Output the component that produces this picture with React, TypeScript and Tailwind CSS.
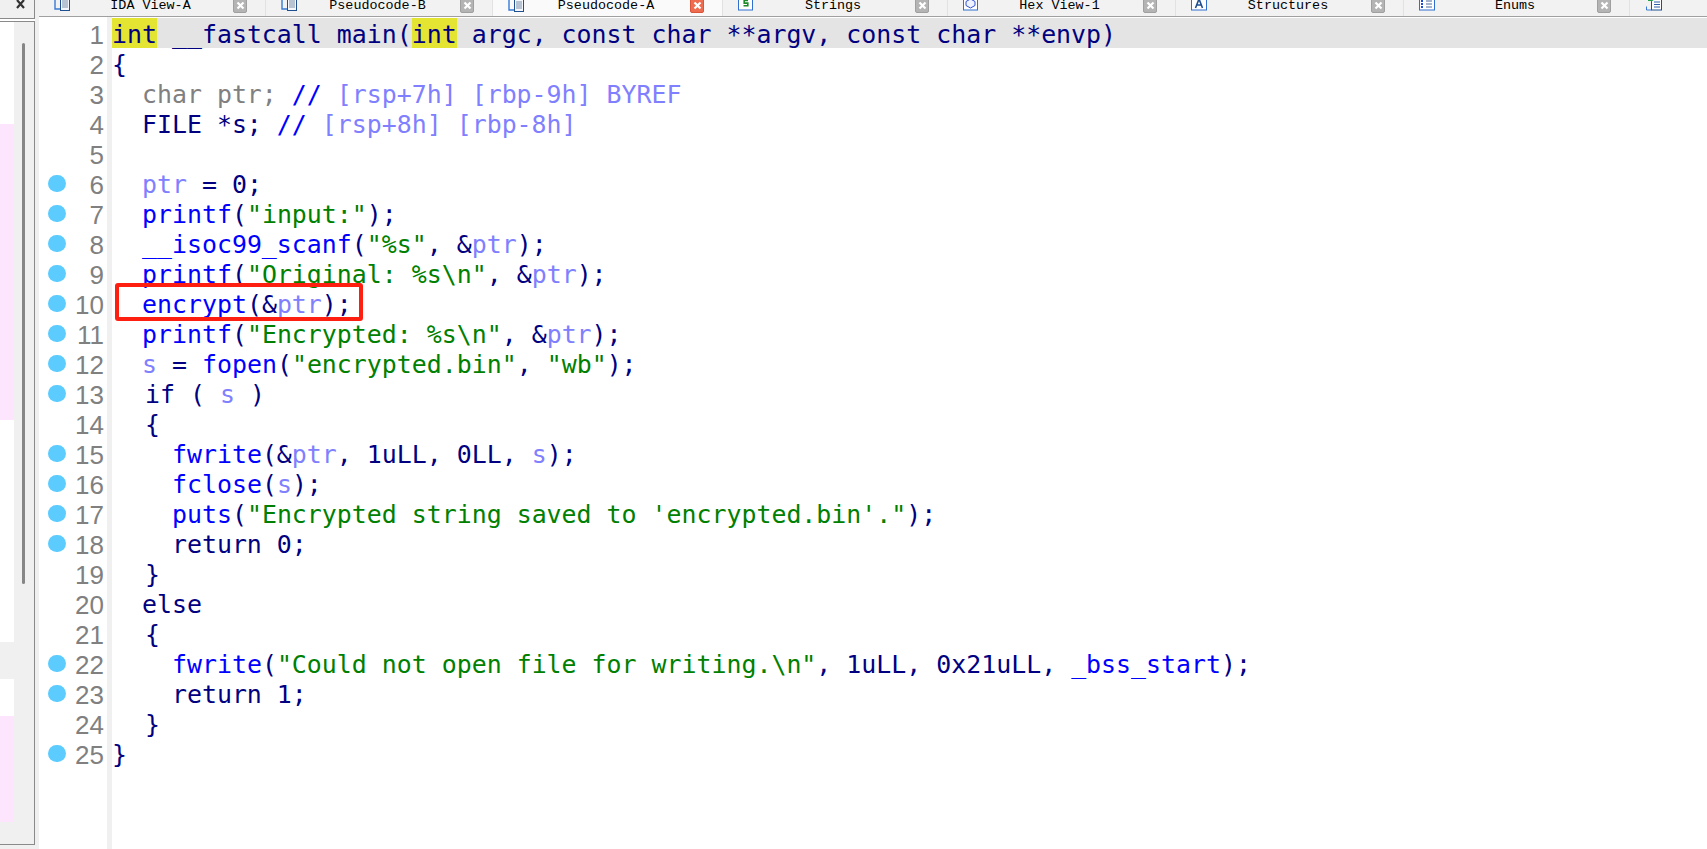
import React from "react";

const NAVY = "text-[#000080]";
const BLUE = "text-[#0000ff]";
const VAR = "text-[#8080ff]";
const STR = "text-[#008000]";
const GRAY = "text-[#808080]";
const YEL = "text-[#000080] bg-[#e4e432]";

type Seg = [string, string];
type Line = { segs: Seg[]; dot?: boolean; shift?: boolean; active?: boolean };

const lines: Line[] = [
  {
    active: true,
    segs: [
      ["int", YEL],
      [" __fastcall main(", NAVY],
      ["int", YEL],
      [" argc, const char **argv, const char **envp)", NAVY],
    ],
  },
  { segs: [["{", NAVY]] },
  { segs: [["  char ptr; ", GRAY], ["// ", BLUE], ["[rsp+7h] [rbp-9h] BYREF", VAR]] },
  { segs: [["  FILE *s; ", NAVY], ["// ", BLUE], ["[rsp+8h] [rbp-8h]", VAR]] },
  { segs: [] },
  { dot: true, segs: [["  ", NAVY], ["ptr", VAR], [" = 0;", NAVY]] },
  { dot: true, segs: [["  ", NAVY], ["printf", BLUE], ["(", NAVY], ['"input:"', STR], [");", NAVY]] },
  { dot: true, segs: [["  ", NAVY], ["__isoc99_scanf", BLUE], ["(", NAVY], ['"%s"', STR], [", &", NAVY], ["ptr", VAR], [");", NAVY]] },
  { dot: true, segs: [["  ", NAVY], ["printf", BLUE], ["(", NAVY], ['"Original: %s\\n"', STR], [", &", NAVY], ["ptr", VAR], [");", NAVY]] },
  { dot: true, segs: [["  ", NAVY], ["encrypt", BLUE], ["(&", NAVY], ["ptr", VAR], [");", NAVY]] },
  { dot: true, segs: [["  ", NAVY], ["printf", BLUE], ["(", NAVY], ['"Encrypted: %s\\n"', STR], [", &", NAVY], ["ptr", VAR], [");", NAVY]] },
  { dot: true, segs: [["  ", NAVY], ["s", VAR], [" = ", NAVY], ["fopen", BLUE], ["(", NAVY], ['"encrypted.bin"', STR], [", ", NAVY], ['"wb"', STR], [");", NAVY]] },
  { dot: true, shift: true, segs: [["  if ( ", NAVY], ["s", VAR], [" )", NAVY]] },
  { shift: true, segs: [["  {", NAVY]] },
  { dot: true, segs: [["    ", NAVY], ["fwrite", BLUE], ["(&", NAVY], ["ptr", VAR], [", 1uLL, 0LL, ", NAVY], ["s", VAR], [");", NAVY]] },
  { dot: true, segs: [["    ", NAVY], ["fclose", BLUE], ["(", NAVY], ["s", VAR], [");", NAVY]] },
  { dot: true, segs: [["    ", NAVY], ["puts", BLUE], ["(", NAVY], ['"Encrypted string saved to \'encrypted.bin\'."', STR], [");", NAVY]] },
  { dot: true, segs: [["    return 0;", NAVY]] },
  { shift: true, segs: [["  }", NAVY]] },
  { segs: [["  else", NAVY]] },
  { shift: true, segs: [["  {", NAVY]] },
  { dot: true, segs: [["    ", NAVY], ["fwrite", BLUE], ["(", NAVY], ['"Could not open file for writing.\\n"', STR], [", 1uLL, 0x21uLL, ", NAVY], ["_bss_start", BLUE], [");", NAVY]] },
  { dot: true, segs: [["    return 1;", NAVY]] },
  { shift: true, segs: [["  }", NAVY]] },
  { dot: true, segs: [["}", NAVY]] },
];

function CloseBox({ active }: { active?: boolean }) {
  return (
    <span
      className={`flex h-[15px] w-[14px] shrink-0 -mt-[6px] items-center justify-center rounded-[2px] border ${
        active ? "border-[#d9553c] bg-[#ee6c50]" : "border-[#a0a0a0] bg-[#b4b4b4]"
      }`}
    >
      <svg width="9" height="9" viewBox="0 0 9 9">
        <path d="M1.5 1.5 7.5 7.5M7.5 1.5 1.5 7.5" stroke="#fff" strokeWidth="2.2" />
      </svg>
    </span>
  );
}

function PageIcon() {
  return (
    <svg width="16" height="14" viewBox="0 0 16 14" className="shrink-0 -mt-[6px]">
      <path d="M1 0v11h6" fill="none" stroke="#3a7bd5" strokeWidth="1.4" />
      <rect x="6.5" y="0.5" width="9" height="12" fill="#f4f8fc" stroke="#1f4f8f" />
      <path d="M8 3h6M8 5h6M8 7h6M8 9h6" stroke="#7a8ea8" />
    </svg>
  );
}

function StringsIcon() {
  return (
    <svg width="15" height="14" viewBox="0 0 15 14" className="shrink-0 -mt-[6px]">
      <rect x="0.5" y="-2" width="14" height="14" fill="#fff" stroke="#2f6fd0" />
      <path d="M10 2.5H6.2v2.6H9.8v2.6H5.5" fill="none" stroke="#1e8a2a" strokeWidth="1.6" />
    </svg>
  );
}

function HexIcon() {
  return (
    <svg width="15" height="14" viewBox="0 0 15 14" className="shrink-0 -mt-[6px]">
      <rect x="0.5" y="-2" width="14" height="14" fill="#fff" stroke="#2f6fd0" />
      <path d="M7.5 1 12 3.5v4L7.5 10 3 7.5v-4Z" fill="#eef3ff" stroke="#3050d8" />
    </svg>
  );
}

function StructIcon() {
  return (
    <svg width="16" height="14" viewBox="0 0 16 14" className="shrink-0 -mt-[6px]">
      <rect x="0.5" y="-2" width="15" height="14" fill="#fff" stroke="#2f6fd0" />
      <path d="M4.5 10 8 1l3.5 9M5.5 7h5" fill="none" stroke="#1f4f8f" strokeWidth="1.6" />
    </svg>
  );
}

function EnumIcon() {
  return (
    <svg width="16" height="14" viewBox="0 0 16 14" className="shrink-0 -mt-[6px]">
      <rect x="0.5" y="-2" width="15" height="14" fill="#fff" stroke="#2f6fd0" />
      <path d="M7 3h6M7 6h6M7 9h6" stroke="#4a6a9a" />
      <path d="M3 2v2M3 5v2M3 8v2" stroke="#1f4fd0" strokeWidth="2" />
    </svg>
  );
}

function ImportIcon() {
  return (
    <svg width="16" height="14" viewBox="0 0 16 14" className="shrink-0 -mt-[6px]">
      <rect x="5.5" y="0.5" width="10" height="11.5" fill="#fff" stroke="#1f4f8f" />
      <path d="M8 4h6M8 6.5h6M8 9h6" stroke="#2f5fa8" />
      <path d="M0.5 8.5V12h5" fill="none" stroke="#3a7bd5" />
      <path d="M2 -1h3v-1l4 3-4 3V3H2Z" fill="#22a045" />
    </svg>
  );
}

const tabs = [
  { name: "IDA View-A", width: "w-[227px]", icon: <PageIcon /> },
  { name: "Pseudocode-B", width: "w-[227px]", icon: <PageIcon /> },
  { name: "Pseudocode-A", width: "w-[230px]", icon: <PageIcon />, active: true },
  { name: "Strings", width: "w-[225px]", icon: <StringsIcon /> },
  { name: "Hex View-1", width: "w-[228px]", icon: <HexIcon /> },
  { name: "Structures", width: "w-[228px]", icon: <StructIcon /> },
  { name: "Enums", width: "w-[226px]", icon: <EnumIcon /> },
];

export default function App() {
  return (
    <div className="flex h-screen overflow-hidden bg-white font-['Liberation_Sans',sans-serif]">
      {/* Left list, mostly cut off */}
      <div className="flex w-[35px] shrink-0 flex-col">
        <div className="flex h-[19px] items-start justify-end border-r border-b border-[#8a8a8a] bg-[#f0f0f0] pr-[9px]">
          <svg width="9" height="9" viewBox="0 0 9 9">
            <path d="M1 0 8 8M8 0 1 8" stroke="#333" strokeWidth="2.2" />
          </svg>
        </div>
        <div className="h-[2px]" />
        <div className="flex min-h-0 flex-1 border-t border-r border-b border-[#8a8a8a]">
          <div className="flex w-[14px] flex-col">
            <div className="h-[102px]" />
            <div className="h-[296px] bg-[#fde6fd]" />
            <div className="h-[222px]" />
            <div className="h-[37px] bg-[#f0f0f0]" />
            <div className="h-[37px]" />
            <div className="h-[106px] bg-[#fde6fd]" />
            <div className="flex-1 bg-[#f0f0f0]" />
          </div>
          <div className="flex-1 bg-[#f0f0f0] pt-[21px] pl-[8px]">
            <div className="h-[541px] w-[3px] rounded-full bg-[#868686]" />
          </div>
        </div>
        <div className="h-[4px] bg-[#f0f0f0]" />
      </div>
      <div className="w-[4px] shrink-0 bg-[#f0f0f0]" />

      <div className="flex min-w-0 flex-1 flex-col">
        {/* Tabs */}
        <div className="flex h-[17px] shrink-0 overflow-hidden border-b border-[#a0a0a0] bg-[#f2f2f2] font-['Liberation_Mono',monospace] text-[13.4px] leading-[16px] text-black">
          {tabs.map((t) => (
            <div
              key={t.name}
              className={`flex shrink-0 items-center border-r border-[#e2e2e2] pr-[18px] pl-[15px] ${t.width} ${
                t.active ? "-mb-px bg-[#fafafa]" : ""
              }`}
            >
              {t.icon}
              <span className="flex-1 -mt-[5px] pr-[2px] text-center">{t.name}</span>
              <CloseBox active={t.active} />
            </div>
          ))}
          <div className="flex items-center pl-[16px]">
            <ImportIcon />
          </div>
        </div>

        <div className="flex min-h-0 flex-1">
          {/* Gutter */}
          <div className="flex w-[68px] shrink-0 flex-col pt-px text-[26px] leading-[26px] text-[#808080]">
            {lines.map((l, i) => (
              <div key={i} className="flex h-[30px] items-center justify-between pr-[3px] pl-[9px]">
                {l.dot ? <span className="h-[17px] w-[18px] rounded-full bg-[#5cccff]" /> : <span />}
                <span className="mt-[3px]">{i + 1}</span>
              </div>
            ))}
          </div>
          <div className="w-[5px] shrink-0 bg-[#f0f0f0]" />

          {/* Code */}
          <div className="relative min-w-0 flex-1 pt-px font-['DejaVu_Sans_Mono',monospace] text-[24.9px] leading-[34px]">
            {lines.map((l, i) => (
              <div
                key={i}
                className={`h-[30px] whitespace-pre ${l.active ? "bg-[#e4e4e4]" : ""} ${l.shift ? "pl-[3px]" : ""}`}
              >
                {l.segs.map((s, k) => (
                  <span key={k} className={`inline-block h-[30px] ${s[1]}`}>
                    {s[0]}
                  </span>
                ))}
              </div>
            ))}
            <div className="absolute top-[266px] left-[3px] h-[38px] w-[248px] rounded-[3px] border-4 border-[#ff1f10]" />
          </div>
        </div>
      </div>
    </div>
  );
}
